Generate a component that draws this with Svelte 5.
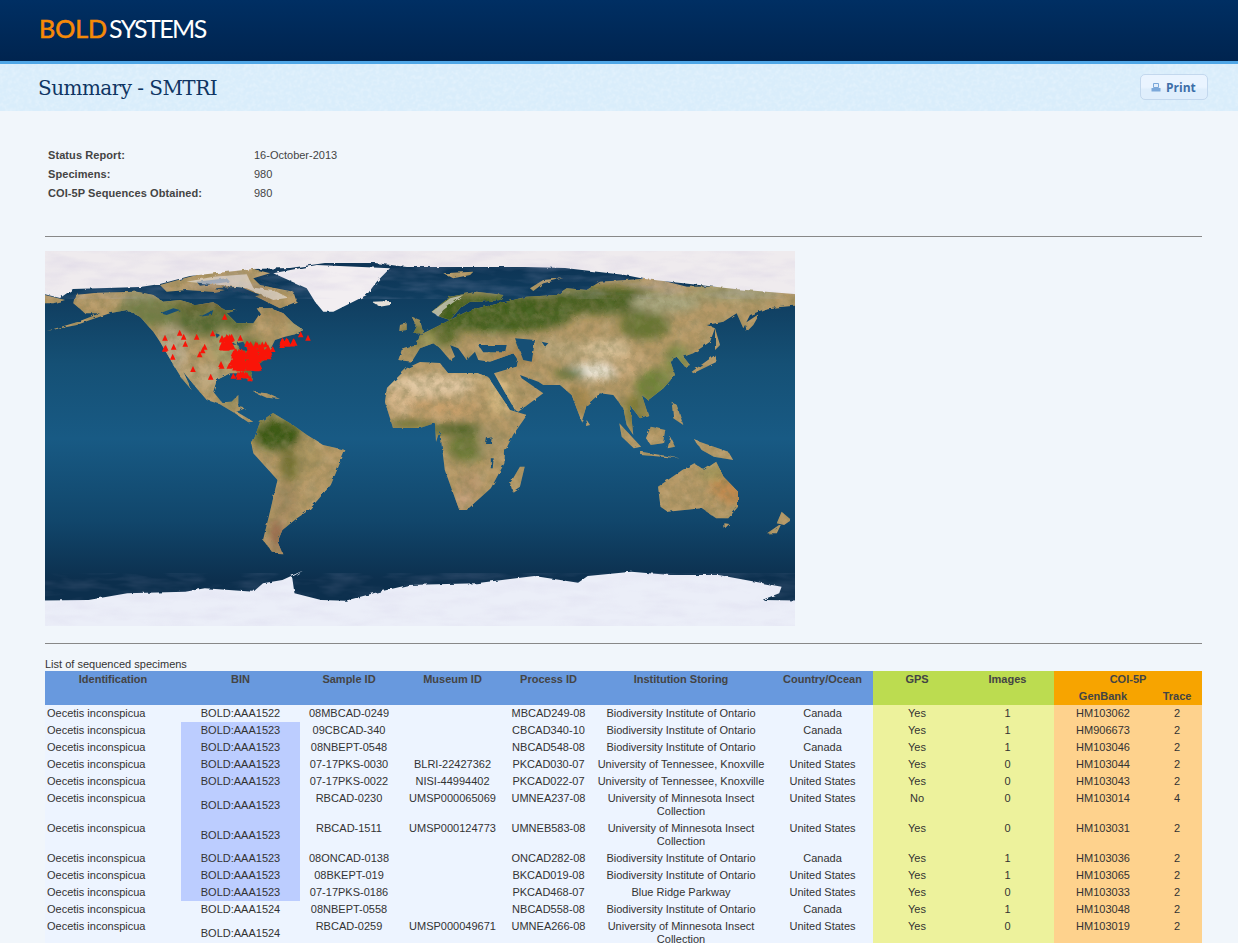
<script>
  const BIO = "Biodiversity Institute of Ontario"
  const UTK = "University of Tennessee, Knoxville"
  const UMN = "University of Minnesota Insect Collection"
  const US = "United States"

  const rows = [
    ["BOLD:AAA1522", "08MBCAD-0249", "", "MBCAD249-08", BIO, "Canada", "Yes", 1, "HM103062", 2],
    ["BOLD:AAA1523", "09CBCAD-340", "", "CBCAD340-10", BIO, "Canada", "Yes", 1, "HM906673", 2],
    ["BOLD:AAA1523", "08NBEPT-0548", "", "NBCAD548-08", BIO, "Canada", "Yes", 1, "HM103046", 2],
    ["BOLD:AAA1523", "07-17PKS-0030", "BLRI-22427362", "PKCAD030-07", UTK, US, "Yes", 0, "HM103044", 2],
    ["BOLD:AAA1523", "07-17PKS-0022", "NISI-44994402", "PKCAD022-07", UTK, US, "Yes", 0, "HM103043", 2],
    ["BOLD:AAA1523", "RBCAD-0230", "UMSP000065069", "UMNEA237-08", UMN, US, "No", 0, "HM103014", 4],
    ["BOLD:AAA1523", "RBCAD-1511", "UMSP000124773", "UMNEB583-08", UMN, US, "Yes", 0, "HM103031", 2],
    ["BOLD:AAA1523", "08ONCAD-0138", "", "ONCAD282-08", BIO, "Canada", "Yes", 1, "HM103036", 2],
    ["BOLD:AAA1523", "08BKEPT-019", "", "BKCAD019-08", BIO, US, "Yes", 1, "HM103065", 2],
    ["BOLD:AAA1523", "07-17PKS-0186", "", "PKCAD468-07", "Blue Ridge Parkway", US, "Yes", 0, "HM103033", 2],
    ["BOLD:AAA1524", "08NBEPT-0558", "", "NBCAD558-08", BIO, "Canada", "Yes", 1, "HM103048", 2],
    ["BOLD:AAA1524", "RBCAD-0259", "UMSP000049671", "UMNEA266-08", UMN, US, "Yes", 0, "HM103019", 2]
  ]

  // outlines were traced from crops, so each list keeps the crop's own coordinates
  const a = (pts) => pts.map(([x, y]) => [x / 3 - 5, y / 3 - 6])
  const b = (pts) => pts.map(([x, y]) => [x / 3 + 355, y / 3 - 6])
  const c = (pts) => pts.map(([x, y]) => [x / 2.063 - 5, y / 3 + 179])
  const toPath = (pts) => "M" + pts.map(([x, y]) => x.toFixed(1) + " " + y.toFixed(1)).join("L") + "Z"

  const land = [
    a([[-20,150],[15,150],[75,165],[40,175],[-20,175]]),
    a([[105,150],[170,143],[290,140],[340,150],[370,170],[420,165],[470,180],[520,172],[555,195],[590,195],[560,205],[590,235],[640,235],[660,205],[650,190],[690,190],[730,205],[760,235],[790,255],[765,268],[735,275],[705,285],[690,315],[690,330],[660,355],[630,375],[640,410],[625,405],[605,385],[570,385],[530,405],[520,440],[545,472],[575,470],[595,450],[595,485],[615,490],[590,500],[640,530],[625,532],[585,505],[540,478],[500,465],[470,430],[430,380],[455,435],[425,400],[395,350],[360,290],[340,260],[300,215],[260,195],[210,205],[150,225],[110,240],[20,258],[110,232],[180,205],[135,205],[100,175]]),
    a([[360,120],[450,95],[560,70],[640,72],[690,85],[640,100],[660,120],[760,140],[770,170],[720,190],[680,170],[640,150],[590,130],[520,140],[440,135],[380,140]]),
    a([[640,440],[680,445],[720,462],[680,458]]),
    a([[1115,215],[1140,225],[1150,265],[1120,265],[1130,245]]),
    a([[1080,240],[1100,235],[1100,255],[1078,258]]),
    // south america
    [[208,191],[215,171],[228,162],[248,174],[262,184],[278,194],...c([[630,60],[600,165],[555,240],[530,265],[500,300],[490,335],[500,370],[480,368],[460,330],[472,260],[490,150],[440,70],[436,40]])],
    // africa
    [[340,151],[342,137],[362,117],[375,111],[395,112],[403,122],[432,122],[443,126],[465,159],[482,164],[468,184],[460,200],...c([[958,100],[930,175],[880,240],[865,240],[835,120],[825,0]]),[391,191],[390,172],[375,177],[348,177]],
    c([[990,110],[1000,110],[990,170],[975,185],[970,160]]),
    // eurasia
    b([[-5,345],[5,315],[50,300],[60,270],[110,245],[150,225],[210,195],[300,175],[380,155],[470,150],[500,130],[560,135],[600,110],[760,100],[860,125],[960,125],[1040,130],[1210,148],[1210,180],[1100,190],[1050,210],[1030,250],[1010,205],[970,230],[920,240],[945,250],[930,290],[880,325],[850,335],[870,360],[855,365],[830,335],[810,345],[825,390],[790,430],[745,465],[725,450],[745,510],[720,520],[690,480],[700,570],[680,540],[670,490],[640,450],[600,445],[560,480],[545,530],[515,450],[480,420],[430,420],[415,410],[360,390],[365,400],[430,445],[355,500],[345,495],[282,385],[350,365],[355,345],[340,325],[270,350],[235,345],[225,320],[200,345],[175,310],[150,300],[165,335],[150,345],[120,310],[100,295],[60,310],[35,350]]),
    b([[95,200],[150,155],[230,140],[310,150],[300,165],[240,170],[210,170],[180,190],[150,225],[120,215]]),
    b([[390,130],[430,105],[490,100],[430,115],[400,138]]),
    b([[130,85],[220,80],[210,90],[160,100]]),
    b([[875,380],[945,330],[950,350],[880,385]]),
    b([[945,250],[960,300],[945,315]]),
    b([[1035,235],[1080,205],[1060,240],[1040,260]]),
    b([[815,470],[830,480],[850,540],[820,520]]),
    b([[560,525],[570,540],[558,543]]),
    c([[1195,-20],[1240,50],[1225,55],[1200,20]]),
    c([[1240,65],[1320,85],[1240,75]]),
    c([[1260,-10],[1290,0],[1285,40],[1260,45],[1250,25]]),
    c([[1300,20],[1310,50],[1295,55]]),
    c([[1350,30],[1420,65],[1430,90],[1390,80],[1365,60]]),
    c([[1275,170],[1325,120],[1350,100],[1370,120],[1395,95],[1410,140],[1440,185],[1440,230],[1420,265],[1395,265],[1365,235],[1295,245],[1280,230]]),
    c([[1412,280],[1422,282],[1412,296]]),
    c([[1530,245],[1550,270],[1535,285],[1520,280]]),
    c([[1500,310],[1530,280],[1520,310]])
  ]
  const landPath = land.map(toPath).join("")

  const seas = [
    b([[235,300],[320,300],[315,322],[250,322]]),
    b([[345,280],[405,285],[395,350],[370,345]]),
    b([[425,290],[445,295],[435,305]]),
    a([[525,262],[540,270],[530,280]]),
    a([[590,295],[610,290],[625,318],[600,315]]),
    a([[575,290],[590,300],[570,298]]),
    a([[360,205],[400,190],[420,195],[380,210]]),
    a([[480,215],[520,195],[515,210]]),
    c([[922,25],[932,22],[930,42],[920,42]]),
    c([[930,85],[936,85],[934,115],[930,115]])
  ].map(toPath).join("")

  const inlets = [
    a([[470,110],[560,100],[570,110],[480,122]]),
    a([[520,130],[600,125],[660,150],[640,155],[590,140]]),
    a([[640,100],[720,120],[700,128]])
  ].map(toPath).join("")

  const iceNorth = [[-20,-20],[760,-20],[760,44],[690,38],[645,33],[600,28],[580,24],[520,17],[480,16],[400,16],[362,16],[330,12],[280,12],[245,17],[208,18],[145,25],[115,33],[95,36],[28,38],[15,47],[-20,38]]
  const greenland = a([[700,85],[830,60],[1050,70],[1010,110],[980,150],[880,200],[850,200],[825,170],[800,130]])
  const snowCaps = [
    a([[440,110],[520,95],[620,88],[640,128],[700,135],[745,158],[700,165],[620,130],[520,118]]),
    b([[95,200],[150,160],[190,150],[130,195],[115,215]])
  ].map(toPath).join("")
  const antarctica = c([[-30,512],[100,510],[180,490],[300,485],[340,475],[440,485],[460,460],[500,450],[545,420],[520,440],[525,490],[580,510],[630,512],[700,485],[760,465],[900,460],[1020,438],[1110,458],[1130,438],[1220,425],[1300,435],[1400,435],[1530,470],[1525,490],[1490,510],[1600,512],[1600,660],[-30,660]])

  // [cx, cy, rx, ry, colour], colour patches laid over the sand base
  const patches = [
    [95, 48, 20, 8, "#8f9068"], [120, 62, 50, 14, "#717d45"], [170, 72, 38, 14, "#566a30"], [205, 100, 16, 12, "#5f7432"],
    [230, 62, 14, 10, "#a58a5a"], [255, 75, 12, 10, "#a49a6a"], [160, 55, 30, 10, "#626830"], [190, 45, 40, 8, "#8a6e48"],
    [128, 98, 14, 24, "#b8a888"], [160, 125, 24, 12, "#bca67c"], [180, 95, 14, 18, "#a8a06c"],
    [212, 118, 16, 16, "#506c28"], [235, 108, 10, 12, "#5c7232"],
    [185, 145, 8, 12, "#8d8a5a"], [225, 163, 5, 5, "#5f7030"],
    [400, 55, 38, 14, "#5e6c2e"], [385, 85, 30, 12, "#5c6c2c"], [455, 62, 75, 20, "#425e1f"],
    [560, 50, 70, 14, "#4c6224"], [620, 52, 35, 10, "#a8a67e"], [690, 42, 45, 8, "#a09c70"], [600, 75, 26, 14, "#687432"],
    [470, 105, 22, 12, "#ad8a56"], [515, 98, 24, 10, "#b8a478"], [560, 98, 26, 10, "#d6bf96"],
    [548, 120, 30, 8, "#f2ecdf"], [585, 115, 20, 10, "#c9a878"], [610, 135, 20, 18, "#6f8238"], [632, 108, 12, 14, "#788840"],
    [590, 160, 12, 16, "#7f7c38"], [530, 150, 16, 14, "#a5884e"], [525, 122, 16, 5, "#4f6c2c"],
    [430, 125, 18, 8, "#c7ab78"], [455, 145, 12, 18, "#d7b880"],
    [385, 135, 45, 12, "#e0c6a0"], [390, 158, 48, 8, "#c9a06c"], [355, 150, 14, 14, "#d6b68a"],
    [365, 172, 20, 4, "#5c6c26"], [410, 178, 30, 6, "#506426"], [422, 197, 20, 14, "#6a7834"], [445, 190, 12, 14, "#a99468"],
    [425, 235, 12, 14, "#b8966c"], [418, 250, 8, 8, "#c29a74"],
    [232, 184, 24, 16, "#3c5a18"], [262, 205, 14, 18, "#ad9660"], [245, 215, 10, 16, "#72702f"], [240, 250, 12, 18, "#a58a5e"], [232, 285, 8, 18, "#9a6e50"],
    [690, 235, 24, 18, "#c08a50"], [668, 222, 14, 8, "#a89a5c"], [712, 230, 5, 18, "#66742f"], [705, 255, 8, 5, "#707634"],
    [382, 88, 10, 6, "#a8a060"]
  ]

  // [x, y] in the first crop's frame
  const single = [[554,215],[375,278],[419,263],[431,275],[470,275],[518,265],[601,278],[782,268],[804,278],[377,308],[401,305],[436,296],[494,305],[488,316],[479,328],[398,335],[459,372],[512,395],[543,357],[580,392],[630,400],[698,312],[374,311],[545,362],[568,362]]
  let seed = 17
  const rnd = () => (seed = (seed * 16807) % 2147483647) / 2147483647
  const scatter = (x0, y0, x1, y1, n) =>
    Array.from({ length: n }, () => [x0 + rnd() * (x1 - x0), y0 + rnd() * (y1 - y0)])
  const markers = a([
    ...single,
    ...scatter(545, 275, 578, 310, 40),
    ...scatter(580, 318, 690, 340, 70),
    ...scatter(620, 295, 685, 322, 30),
    ...scatter(572, 338, 660, 370, 80),
    ...scatter(592, 386, 622, 396, 12),
    ...scatter(722, 285, 765, 300, 14)
  ])
  const markerPath = markers.map(([x, y]) => `M${x.toFixed(1)} ${(y - 3).toFixed(1)}l2.8 6h-5.6z`).join("")
</script>

<header class="topbar">
  <div class="logo"><span class="bold">BOLD</span><span class="systems">SYSTEMS</span></div>
</header>

<div class="subbar">
  <h1>Summary - SMTRI</h1>
  <button class="print">
    <svg width="10" height="9" viewBox="0 0 10 9">
      <path d="M2.5 .5h5v4h-5z" fill="#e4effb" stroke="#7ba8da" />
      <path d="M.5 5h9v3.500h-9z" fill="#7ba8da" />
    </svg>
    Print
  </button>
</div>

<main>
  <dl class="status">
    <dt>Status Report:</dt><dd>16-October-2013</dd>
    <dt>Specimens:</dt><dd>980</dd>
    <dt>COI-5P Sequences Obtained:</dt><dd>980</dd>
  </dl>

  <hr class="first" />

  <svg class="map" width="750" height="375" viewBox="0 0 750 375">
    <defs>
      <linearGradient id="ocean" x1="0" y1="0" x2="0" y2="1">
        <stop offset="0" stop-color="#0c3050" />
        <stop offset=".3" stop-color="#155075" />
        <stop offset=".5" stop-color="#185a84" />
        <stop offset=".72" stop-color="#11466b" />
        <stop offset=".88" stop-color="#0c2f4d" />
        <stop offset="1" stop-color="#0c2f4d" />
      </linearGradient>
      <clipPath id="landclip"><path d={landPath} /></clipPath>
      <filter id="rough" filterUnits="userSpaceOnUse" x="-40" y="-40" width="830" height="455">
        <feTurbulence type="fractalNoise" baseFrequency=".16" numOctaves="3" seed="4" />
        <feDisplacementMap in="SourceGraphic" scale="3" />
      </filter>
      <filter id="soft" filterUnits="userSpaceOnUse" x="0" y="0" width="750" height="375">
        <feGaussianBlur stdDeviation="4.5" />
      </filter>
      <filter id="grain" x="0" y="0" width="100%" height="100%">
        <feTurbulence type="fractalNoise" baseFrequency=".11" numOctaves="4" seed="9" />
        <feColorMatrix values="0 0 0 0 .22  0 0 0 0 .2  0 0 0 0 .08  1.8 0 0 0 -.6" />
      </filter>
      <filter id="glare" x="0" y="0" width="100%" height="100%">
        <feTurbulence type="fractalNoise" baseFrequency=".07" numOctaves="3" seed="21" />
        <feColorMatrix values="0 0 0 0 .95  0 0 0 0 .85  0 0 0 0 .65  1.6 0 0 0 -.7" />
      </filter>
      <filter id="wisp" x="0" y="0" width="100%" height="100%">
        <feTurbulence type="fractalNoise" baseFrequency=".025 .1" numOctaves="3" seed="3" />
        <feColorMatrix values="0 0 0 0 .55  0 0 0 0 .5  0 0 0 0 .72  1.4 0 0 0 -.55" />
      </filter>
    </defs>

    <rect width="750" height="375" fill="url(#ocean)" />

    <g filter="url(#rough)">
      <g clip-path="url(#landclip)">
        <rect width="750" height="375" fill="#b79a68" />
        <g filter="url(#soft)">
          {#each patches as [cx, cy, rx, ry, colour]}
            <ellipse {cx} {cy} {rx} {ry} fill={colour} />
          {/each}
        </g>
        <rect width="750" height="375" filter="url(#grain)" opacity=".55" />
        <rect width="750" height="375" filter="url(#glare)" opacity=".16" />
      </g>
      <path d={seas} fill="#154f75" />
      <path d={inlets} fill="#123e5e" />
      <path d={snowCaps} fill="#e6e0dc" opacity=".65" />

      <path d={toPath(iceNorth)} fill="#efebee" />
      <path d={toPath(greenland)} fill="#f2eef1" />
      <path d={toPath(a([[995,170],[1050,168],[1050,180],[1020,185]]))} fill="#e6e0d8" />
      <path d={toPath(antarctica)} fill="#ebeef8" />
    </g>
    <rect width="750" height="48" filter="url(#wisp)" opacity=".35" />
    <rect y="322" width="750" height="53" filter="url(#wisp)" opacity=".22" />

    <path d={markerPath} fill="#f91408" />
  </svg>

  <hr class="second" />

  <p class="caption">List of sequenced specimens</p>
  <table>
    <colgroup>
      <col class="c-id" /><col class="c-bin" /><col class="c-sample" /><col class="c-museum" />
      <col class="c-process" /><col class="c-inst" /><col class="c-country" /><col class="c-gps" />
      <col class="c-images" /><col class="c-gen" /><col class="c-trace" />
    </colgroup>
    <thead>
      <tr>
        <th class="blue">Identification</th>
        <th class="blue">BIN</th>
        <th class="blue">Sample ID</th>
        <th class="blue">Museum ID</th>
        <th class="blue">Process ID</th>
        <th class="blue">Institution Storing</th>
        <th class="blue">Country/Ocean</th>
        <th class="green">GPS</th>
        <th class="green">Images</th>
        <th class="orange" colspan="2">COI-5P</th>
      </tr>
      <tr>
        <th class="blue" colspan="7"></th>
        <th class="green" colspan="2"></th>
        <th class="orange">GenBank</th>
        <th class="orange">Trace</th>
      </tr>
    </thead>
    <tbody>
      {#each rows as r}
        <tr>
          <td class="left">Oecetis inconspicua</td>
          <td class="bin" class:hit={r[0] === "BOLD:AAA1523"}>{r[0]}</td>
          <td>{r[1]}</td>
          <td>{r[2]}</td>
          <td>{r[3]}</td>
          <td>{r[4]}</td>
          <td>{r[5]}</td>
          <td class="pale-green">{r[6]}</td>
          <td class="pale-green">{r[7]}</td>
          <td class="pale-orange">{r[8]}</td>
          <td class="pale-orange">{r[9]}</td>
        </tr>
      {/each}
    </tbody>
  </table>
</main>

<style>
  :global(body) {
    background: #f1f6fb;
    overflow: hidden;
    font-family: "Liberation Sans", Arial, sans-serif;
    font-size: 11px;
    color: #333;
  }

  .topbar {
    height: 61px;
    padding-left: 39px;
    background: linear-gradient(#002f63, #00244f);
    border-bottom: 3px solid #4fa6e6;
  }

  .logo {
    display: flex;
    padding-top: 13px;
    font-family: Lato, sans-serif;
    font-size: 25px;
    line-height: 30px;
  }

  .bold {
    color: #f58a07;
    -webkit-text-stroke: 0.6px #f58a07;
    margin-right: 2px;
  }

  .systems {
    color: #fff;
    letter-spacing: -1.6px;
  }

  .subbar {
    display: flex;
    justify-content: space-between;
    align-items: flex-start;
    height: 47px;
    padding: 0 30px 0 38px;
    background-color: #d9edfb;
    background-image: url("data:image/svg+xml,%3Csvg xmlns='http://www.w3.org/2000/svg' width='300' height='47'%3E%3Cfilter id='n'%3E%3CfeTurbulence type='fractalNoise' baseFrequency='.25' numOctaves='3'/%3E%3CfeColorMatrix values='0 0 0 0 1 0 0 0 0 1 0 0 0 0 1 1.5 0 0 0 -.6'/%3E%3C/filter%3E%3Crect width='300' height='47' filter='url(%23n)' opacity='.35'/%3E%3C/svg%3E");
  }

  h1 {
    margin: 11px 0 0;
    font-family: "DejaVu Serif", serif;
    font-size: 20px;
    line-height: 26px;
    font-weight: 400;
    color: #0f3563;
    letter-spacing: -0.55px;
  }

  .print {
    display: flex;
    align-items: center;
    gap: 5px;
    width: 68px;
    height: 26px;
    margin-top: 10px;
    padding: 0 0 0 10px;
    border: 1px solid #c3d8ee;
    border-radius: 5px;
    background: linear-gradient(#eaf4ff 50%, #dfeefc 60%);
    font-family: "Open Sans", sans-serif;
    font-size: 12px;
    font-weight: 700;
    color: #3d6ea8;
  }

  main {
    padding: 34px 36px 0 45px;
  }

  .status {
    display: grid;
    grid-template-columns: 206px 1fr;
    grid-auto-rows: 19px;
    align-items: center;
    margin: 0 0 0 3px;
  }

  .status dt {
    font-weight: 700;
    letter-spacing: 0.08px;
    color: #444;
  }

  .status dd {
    margin: 0;
    color: #444;
  }

  hr {
    border: 0;
    border-top: 1px solid #888;
    margin: 0;
  }

  hr.first {
    margin-top: 34px;
  }

  .map {
    display: block;
    margin-top: 14px;
  }

  hr.second {
    margin-top: 17px;
  }

  .caption {
    margin: 14px 0 0;
    line-height: 13px;
    color: #333;
  }

  table {
    width: 1157px;
    table-layout: fixed;
    border-collapse: collapse;
    background: #edf4ff;
    line-height: 13px;
  }

  .c-id { width: 136px; }
  .c-bin { width: 119px; }
  .c-sample { width: 98px; }
  .c-museum { width: 109px; }
  .c-process { width: 83px; }
  .c-inst { width: 182px; }
  .c-country { width: 101px; }
  .c-gps { width: 88px; }
  .c-images { width: 93px; }
  .c-gen { width: 98px; }
  .c-trace { width: 50px; }

  th {
    height: 13px;
    padding: 2px;
    font-weight: 700;
    color: #444;
    text-align: center;
  }

  .blue { background: #6899de; }
  .green { background: #bcdc50; }
  .orange { background: #f7a400; }

  td {
    padding: 2px;
    text-align: center;
    vertical-align: top;
    color: #333;
  }

  td.left {
    text-align: left;
  }

  td.bin {
    vertical-align: middle;
  }

  td.hit {
    background: #bccdff;
  }

  .pale-green { background: #edf29c; }
  .pale-orange { background: #fed28d; }
</style>
